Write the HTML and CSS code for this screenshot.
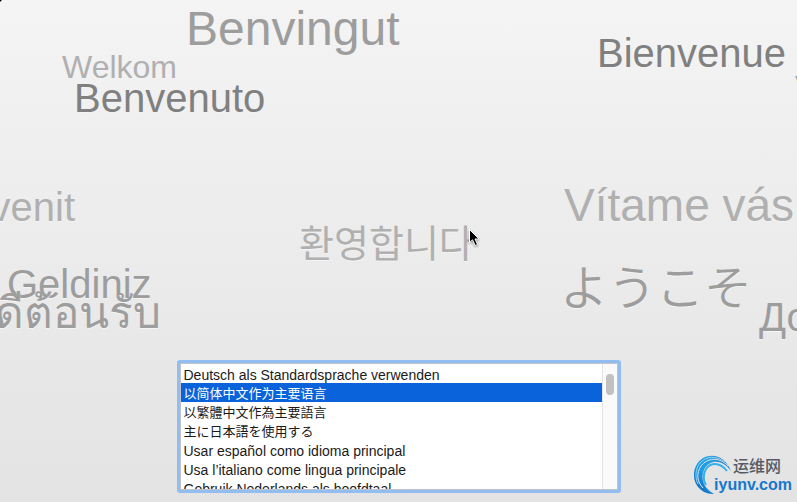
FILE: index.html
```html
<!DOCTYPE html>
<html lang="en">
<head>
    <meta charset="UTF-8">
    <meta name="viewport" content="width=device-width, initial-scale=1.0">
    <title>Welcome</title>
    <link rel="stylesheet" href="styles.css">
</head>
<body>

    <!-- Floating greetings -->
    <div class="greetings">
        <span class="word large mid benvingut" lang="ca">Benvingut</span>
        <span class="word small light welkom" lang="nl">Welkom</span>
        <span class="word medium dark benvenuto" lang="it">Benvenuto</span>
        <span class="word medium dark bienvenue" lang="fr">Bienvenue</span>
        <span class="word medium mid velkommen" lang="da">Velkommen</span>
        <span class="word medium light bine" lang="ro">Bun venit</span>
        <span class="word large light vitame" lang="cs">Vítame vás</span>
        <span class="word korean light" lang="ko">환영합니다</span>
        <span class="word medium mid geldiniz" lang="tr">Geldiniz</span>
        <span class="word mid thai" lang="th">ยินดีต้อนรับ</span>
        <span class="word large mid japanese" lang="ja">ようこそ</span>
        <span class="word medium mid russian" lang="ru">Добро</span>
    </div>

    <!-- Language list -->
    <main class="chooser">
        <form class="list-box">
            <select class="languages" size="7" aria-label="Language">
                <option lang="de">Deutsch als Standardsprache verwenden</option>
                <option lang="zh-CN" selected>以简体中文作为主要语言</option>
                <option lang="zh-TW">以繁體中文作為主要語言</option>
                <option lang="ja">主に日本語を使用する</option>
                <option lang="es">Usar español como idioma principal</option>
                <option lang="it">Usa l’italiano come lingua principale</option>
                <option lang="nl">Gebruik Nederlands als hoofdtaal</option>
            </select>
            <div class="scroll-track">
                <div class="scroll-thumb"></div>
            </div>
        </form>
    </main>

    <!-- Site badge -->
    <div class="badge">
        <svg class="badge-swirl" width="40" height="42" viewBox="0 0 40 42">
            <defs>
                <linearGradient id="swirl" x1="1" y1="0" x2="0" y2="1">
                    <stop offset="0" stop-color="#174a94"/>
                    <stop offset="0.3" stop-color="#2a9fe0"/>
                    <stop offset="0.6" stop-color="#1f9ae4"/>
                    <stop offset="1" stop-color="#0a5fb8"/>
                </linearGradient>
            </defs>
            <path fill="url(#swirl)" d="M37 17C32 4 20 -2 9 4C-2 11 -3 27 6 35C10 39 15 40 20 40C11 35 7 27 9 19C12 6 27 3 37 17Z"/>
            <path fill="none" stroke="#e0e8ee" stroke-width="1" d="M34 12C25 2 13 4 7 12C2 19 3 28 9 34"/>
            <path fill="none" stroke="#8fd8f8" stroke-width="1" d="M31 8C22 1 12 2 6 9C1 15 1 24 4 30"/>
            <path fill="none" stroke="#35b0ec" stroke-width="2" d="M33 17C25 7 16 9 12 15C9 20 9 27 12 31"/>
        </svg>
        <span class="badge-name" lang="zh-CN">运维网</span>
        <span class="badge-site">iyunv.com</span>
    </div>

    <svg class="corner" width="3" height="3" viewBox="0 0 3 3"><path d="M0 0H2L0 2Z"/></svg>

    <!-- Mouse pointer -->
    <svg class="pointer" width="14" height="20" viewBox="0 0 14 20">
        <path fill="#000" stroke="#fff" stroke-width="1" d="M1.5 1.5V14.5L4.5 11.8L7.2 17.5L9.6 16.4L7 11H11Z"/>
    </svg>

</body>
</html>
```
FILE: styles.css
```css
* {
    box-sizing: border-box;
}

body {
    margin: 0;
    min-height: 100vh;
    display: flex;
    flex-direction: column;
    justify-content: flex-end;
    position: relative;
    overflow: hidden;
    font-family: "Liberation Sans", "Noto Sans CJK SC", sans-serif;
    background: linear-gradient(#f4f4f4, #e3e3e3);
}

/* Greetings */
.greetings {
    position: absolute;
    inset: 0;
    overflow: hidden;
}

.word {
    position: absolute;
    line-height: 48px;
    white-space: nowrap;
    text-shadow: 0 1px 0 #f4f4f4;
}

.small {
    font-size: 32px;
}

.medium {
    font-size: 40px;
}

.large {
    font-size: 48px;
}

.light {
    color: #b0b0b0;
}

.mid {
    color: #9d9d9d;
}

.dark {
    color: #808080;
}

.benvingut {
    left: 186px;
    top: 5px;
}

.welkom {
    left: 62px;
    top: 43px;
}

.benvenuto {
    left: 74px;
    top: 74px;
}

.bienvenue {
    left: 597px;
    top: 29px;
}

.velkommen {
    left: 795px;
    top: 66px;
}

.bine {
    right: 722px;
    top: 183px;
}

.vitame {
    left: 564px;
    top: 181px;
    font-size: 46px;
}

.korean {
    left: 299px;
    top: 217px;
    font-size: 38px;
    font-family: "Noto Sans CJK KR", sans-serif;
}

.geldiniz {
    left: 7px;
    top: 260px;
}

.thai {
    right: 636px;
    top: 289px;
    font-size: 44px;
}

.japanese {
    left: 560px;
    top: 260px;
    font-family: "Noto Sans CJK JP", sans-serif;
    font-weight: 350;
}

.russian {
    left: 759px;
    top: 293px;
}

/* Language list */
.chooser {
    display: flex;
    justify-content: center;
    padding-bottom: 9px;
}

.list-box {
    position: relative;
    display: flex;
    width: 56%;
    max-width: 444px;
    height: 133px;
    padding: 1px;
    border: 3px solid #92bdf0;
    border-radius: 3px;
    background: #c0c4ca;
}

.languages {
    flex: 1;
    height: 100%;
    padding: 0;
    border: 0;
    border-radius: 0;
    outline: 0;
    background: #fff;
    overflow: hidden;
    scrollbar-width: none;
    font-family: "Liberation Sans", "Noto Sans CJK SC", sans-serif;
    font-size: 14px;
}

.languages option {
    height: 19px;
    min-height: 19px;
    padding: 3px 3px 0;
    line-height: 16px;
    color: #1a1a1a;
}

.languages option:lang(zh),
.languages option:lang(ja) {
    padding-top: 0;
    font-size: 13px;
    line-height: 19px;
}

.languages option:checked {
    background: #0a63da linear-gradient(#0a63da, #0a63da);
    -webkit-text-fill-color: #fff;
}

.scroll-track {
    width: 15px;
    padding: 10px 3px;
    border-left: 1px solid #e4e4e4;
    background: #fafafa;
}

.scroll-thumb {
    width: 8px;
    height: 21px;
    border-radius: 4px;
    background: #c1c1c1;
}

/* Site badge */
.badge {
    position: absolute;
    right: 5px;
    bottom: 6px;
    width: 98px;
    height: 42px;
}

.badge-swirl {
    position: absolute;
    left: 0;
    top: 0;
}

.badge-name {
    position: absolute;
    right: 11px;
    top: 3px;
    font-size: 16px;
    line-height: 20px;
    font-weight: 500;
    color: #555b66;
}

.badge-site {
    position: absolute;
    right: 0;
    top: 21px;
    font-size: 16px;
    line-height: 20px;
    font-weight: bold;
    color: #1678cc;
}

.corner {
    position: absolute;
    left: 0;
    top: 0;
}

/* Pointer */
.pointer {
    position: absolute;
    left: 468px;
    top: 228px;
    filter: drop-shadow(0 1px 1px rgba(0, 0, 0, 0.4));
}
```
